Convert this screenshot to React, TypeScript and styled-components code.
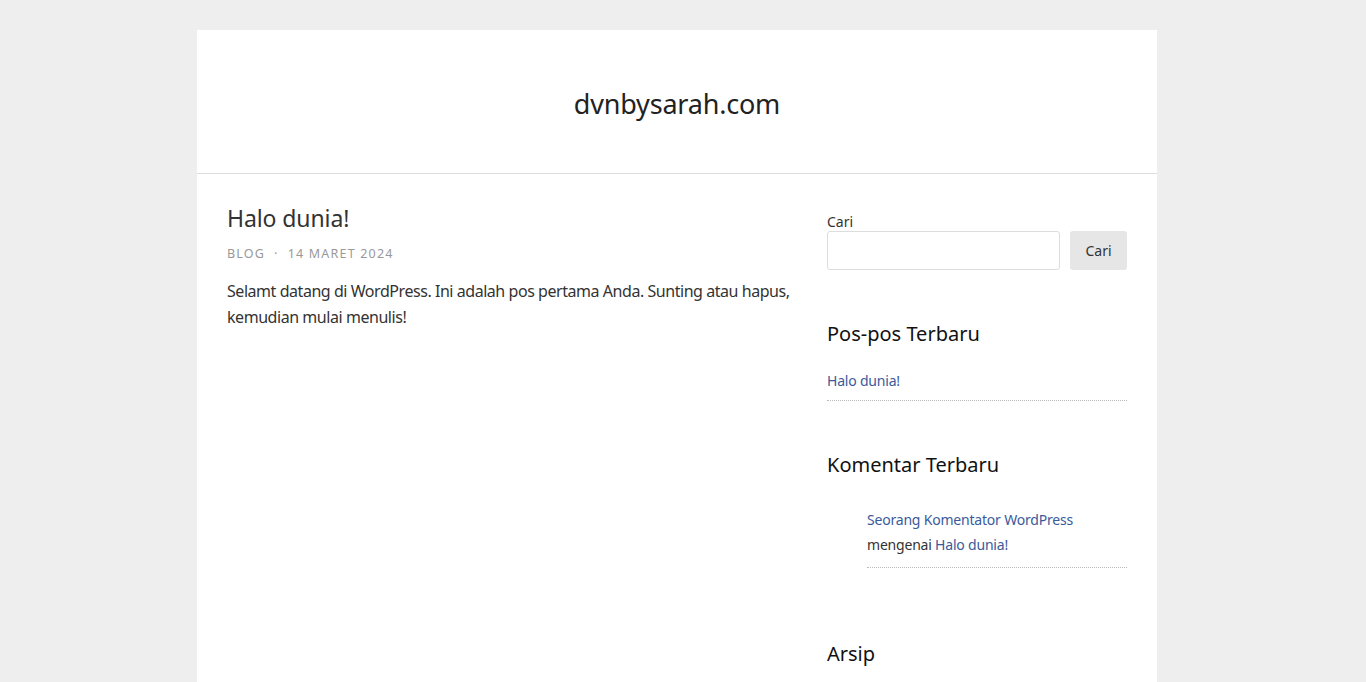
import React from 'react';
import styled, { createGlobalStyle } from 'styled-components';

const GlobalStyle = createGlobalStyle`
  html, body {
    margin: 0;
    padding: 0;
    background: #eeeeee;
  }
  body {
    font-family: 'Noto Sans', 'Open Sans', sans-serif;
    color: #333;
  }
  * {
    box-sizing: border-box;
  }
`;

const App = () => {
  return (
    <>
      <GlobalStyle />
      <Page>
        <Site>
          <Header>
            <SiteTitle>dvnbysarah.com</SiteTitle>
          </Header>
          <Body>
            <Main>
              <PostTitle>Halo dunia!</PostTitle>
              <Meta>
                <span>Blog</span>
                <Dot>·</Dot>
                <span>14 Maret 2024</span>
              </Meta>
              <Content>
                Selamt datang di WordPress. Ini adalah pos pertama Anda. Sunting atau hapus,
                kemudian mulai menulis!
              </Content>
            </Main>
            <Sidebar>
              <SearchWidget>
                <Label htmlFor="s">Cari</Label>
                <SearchRow>
                  <SearchInput id="s" type="text" />
                  <SearchButton type="button">Cari</SearchButton>
                </SearchRow>
              </SearchWidget>

              <Widget>
                <WidgetTitle>Pos-pos Terbaru</WidgetTitle>
                <List>
                  <Item>
                    <Link href="#">Halo dunia!</Link>
                  </Item>
                </List>
              </Widget>

              <Widget>
                <WidgetTitle>Komentar Terbaru</WidgetTitle>
                <List $indent>
                  <Item $comment>
                    <Link href="#">Seorang Komentator WordPress</Link>
                    <br />
                    mengenai <Link href="#">Halo dunia!</Link>
                  </Item>
                </List>
              </Widget>

              <Widget>
                <WidgetTitle>Arsip</WidgetTitle>
              </Widget>
            </Sidebar>
          </Body>
        </Site>
      </Page>
    </>
  );
};

export default App;

const Page = styled.div`
  padding: 30px 12px 0 0;
  min-height: 100vh;
`;

const Site = styled.div`
  width: 960px;
  margin: 0 auto;
  background: #fff;
  min-height: 700px;
`;

const Header = styled.header`
  height: 144px;
  padding-top: 3px;
  border-bottom: 1px solid #ddd;
  display: flex;
  align-items: center;
  justify-content: center;
`;

const SiteTitle = styled.h1`
  margin: 0;
  font-size: 27px;
  font-weight: 400;
  color: #222;
  letter-spacing: -0.2px;
`;

const Body = styled.div`
  display: flex;
  gap: 30px;
  padding: 29px 30px 0;
`;

const Main = styled.main`
  flex: 1;
  min-width: 0;
`;

const PostTitle = styled.h2`
  margin: 0;
  font-size: 23px;
  font-weight: 400;
  line-height: 30px;
  color: #333;
  letter-spacing: -0.1px;
`;

const Meta = styled.div`
  margin-top: 13px;
  font-size: 12.5px;
  line-height: 16px;
  text-transform: uppercase;
  letter-spacing: 1.2px;
  color: #999;
`;

const Dot = styled.span`
  margin: 0 9px;
`;

const Content = styled.p`
  margin: 16px 0 0;
  font-size: 16px;
  line-height: 26px;
  letter-spacing: -0.45px;
  color: #333;
`;

const Sidebar = styled.aside`
  flex: 0 0 300px;
  font-size: 14px;
  padding-top: 1px;
`;

const SearchWidget = styled.div`
  margin-top: 10px;
`;

const Label = styled.label`
  display: block;
  font-size: 14px;
  line-height: 16px;
  color: #333;
  margin-bottom: 1px;
`;

const SearchRow = styled.div`
  display: flex;
  gap: 10px;
`;

const SearchInput = styled.input`
  flex: 1;
  height: 39px;
  border: 1px solid #ddd;
  border-radius: 3px;
  background: #fff;
  outline: none;
`;

const SearchButton = styled.button`
  width: 57px;
  height: 39px;
  border: none;
  border-radius: 3px;
  background: #e6e6e6;
  font-family: inherit;
  font-size: 14px;
  color: #333;
`;

const Widget = styled.section`
  margin-top: 52px;
`;

const WidgetTitle = styled.h3`
  margin: 0;
  font-size: 20px;
  font-weight: 400;
  line-height: 24px;
  color: #111;
`;

const List = styled.ul<{ $indent?: boolean }>`
  list-style: none;
  margin: ${({ $indent }) => ($indent ? '30px' : '22px')} 0 0;
  padding: 0 0 ${({ $indent }) => ($indent ? '22px' : '0')}
    ${({ $indent }) => ($indent ? '40px' : '0')};
`;

const Item = styled.li<{ $comment?: boolean }>`
  font-size: 14px;
  line-height: 25px;
  letter-spacing: -0.2px;
  color: #333;
  padding-bottom: ${({ $comment }) => ($comment ? '10px' : '7px')};
  border-bottom: 1px dotted #bbb;
`;

const Link = styled.a`
  color: #3a5a9c;
  text-decoration: none;
`;
